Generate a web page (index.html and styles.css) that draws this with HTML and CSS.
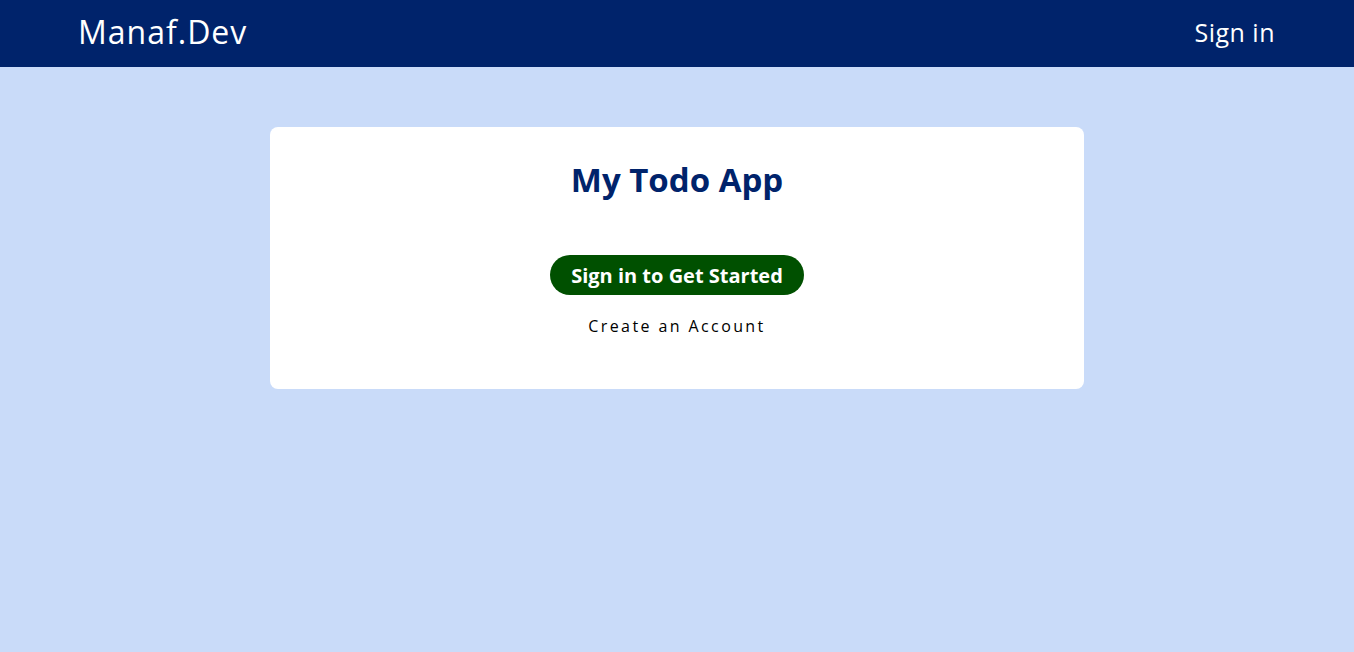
FILE: index.html
```html
<!DOCTYPE html>
<html lang="en">
<head>
<meta charset="utf-8">
<title>My Todo App</title>
<link rel="stylesheet" href="styles.css">
</head>
<body>
<header class="navbar">
  <a class="brand" href="#">Manaf.Dev</a>
  <a class="nav-link" href="#">Sign in</a>
</header>
<main class="main">
  <section class="card">
    <h1 class="title">My Todo App</h1>
    <a class="btn-start" href="#">Sign in to Get Started</a>
    <a class="create-link" href="#">Create an Account</a>
  </section>
</main>
</body>
</html>
```
FILE: styles.css
```css
* { box-sizing: border-box; }
html, body { height: 100%; }
body {
  margin: 0;
  background: #c9dbf9;
  font-family: "Open Sans", "DejaVu Sans", sans-serif;
}
a { text-decoration: none; }
.navbar {
  height: 67px;
  background: #00236b;
  display: flex;
  align-items: center;
  justify-content: space-between;
  padding: 0 79px 4px 78px;
}
.brand {
  color: #ffffff;
  font-size: 32px;
  font-weight: 500;
  letter-spacing: 1px;
}
.nav-link {
  color: #ffffff;
  font-size: 25px;
  letter-spacing: 0.5px;
}
.main {
  display: flex;
  justify-content: center;
  padding-top: 60px;
}
.card {
  width: 814px;
  height: 262px;
  background: #ffffff;
  border-radius: 8px;
  display: flex;
  flex-direction: column;
  align-items: center;
  padding-top: 31px;
}
.title {
  margin: 0;
  color: #00236b;
  font-size: 33px;
  font-weight: 700;
  line-height: 44px;
}
.btn-start {
  margin-top: 53px;
  height: 40px;
  width: 254px;
  border-radius: 20px;
  background: #005000;
  color: #ffffff;
  font-size: 20px;
  font-weight: 700;
  display: flex;
  align-items: center;
  justify-content: center;
}
.create-link {
  margin-top: 20px;
  color: #000000;
  font-size: 16px;
  letter-spacing: 2.4px;
  line-height: 22px;
}
```
